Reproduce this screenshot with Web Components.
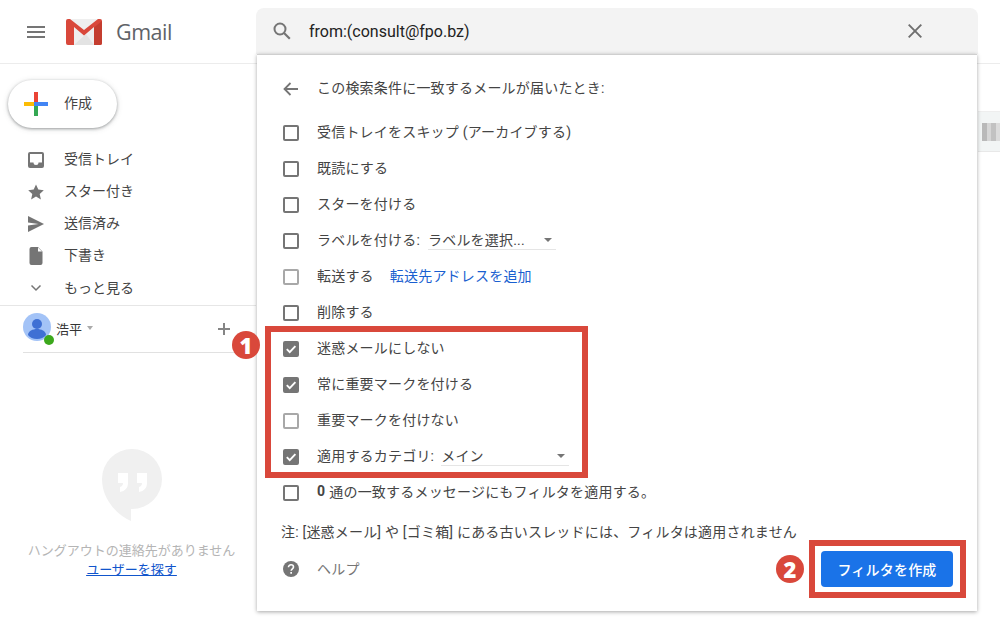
<!DOCTYPE html>
<html lang="ja">
<head>
<meta charset="utf-8">
<title>Gmail</title>
<style>
    html, body { margin: 0; height: 100%; background: #fff; overflow: hidden; }
    body { font: 14px Roboto, "Noto Sans CJK JP", sans-serif; color: #444; }
</style>
</head>
<body>
<gm-app>
    <gm-header slot="header"></gm-header>
    <gm-sidebar slot="side"></gm-sidebar>
    <gm-peek slot="peek"></gm-peek>
    <gm-callout slot="over" number="1" style="left:265px;top:326px;width:323px;height:152px" badge-x="-33" badge-y="5"></gm-callout>
    <gm-callout slot="over" number="2" style="left:809px;top:540px;width:157px;height:58px" badge-x="-33" badge-y="15"></gm-callout>
</gm-app>

<script>
const JP = `Roboto, "Noto Sans CJK JP", sans-serif`;

class GmElement extends HTMLElement {
    constructor(html) {
        super();
        const template = document.createElement("template");
        template.innerHTML = html;
        this.attachShadow({ mode: "open" }).appendChild(template.content.cloneNode(true));
    }
}

class GmApp extends GmElement {
    constructor() {
        super(`
            <style>
                :host { display: block; position: relative; width: 1000px; height: 633px; overflow: hidden; }
                .body { display: flex; }
                .side { width: 256px; flex: none; }
                .main { flex: 1; display: flex; flex-direction: column; align-items: flex-end; }
            </style>
            <slot name="header"></slot>
            <div class="body">
                <div class="side"><slot name="side"></slot></div>
                <div class="main"><slot name="peek"></slot></div>
            </div>
            <slot name="over"></slot>
        `);
    }
}

class GmHeader extends GmElement {
    constructor() {
        super(`
            <style>
                :host { display: flex; height: 63px; border-bottom: 1px solid #ececec; position: relative; z-index: 2; }
                .brand { width: 256px; flex: none; display: flex; align-items: center; }
                .menu { margin-left: 27px; width: 18px; height: 12px; margin-top: 1px; }
                .logo { margin-left: 21px; width: 36px; height: 26px; }
                .name { margin-left: 14px; font: 21.5px/26px "Open Sans", sans-serif; letter-spacing: -0.5px; color: #5f6368; }
            </style>
            <div class="brand">
                <svg class="menu" viewBox="0 0 18 12"><path d="M0 0h18v2H0zM0 5h18v2H0zM0 10h18v2H0z" fill="#757575"/></svg>
                <svg class="logo" viewBox="0 0 36 26">
                    <path d="M2 0h32a2 2 0 0 1 2 2v22a2 2 0 0 1-2 2H2a2 2 0 0 1-2-2V2a2 2 0 0 1 2-2z" fill="#efefef"/>
                    <path d="M8 26 20 15l8 11z" fill="#e3e3e3"/>
                    <path d="M0 2a2 2 0 0 1 2-2h2l14 11L32 0h2a2 2 0 0 1 2 2v22a2 2 0 0 1-2 2h-6V8l-10 8.500L8 8v18H2a2 2 0 0 1-2-2z" fill="#d9483b"/>
                    <path d="M28 8.500 36 2v22a2 2 0 0 1-2 2h-6z" fill="#c43d2f"/>
                </svg>
                <span class="name">Gmail</span>
            </div>
            <gm-search></gm-search>
        `);
    }
}

class GmSearch extends GmElement {
    constructor() {
        super(`
            <style>
                :host { display: block; position: relative; width: 722px; height: 46px; margin-top: 8px; background: #f3f3f3; border-radius: 8px 8px 0 0; }
                .bar { display: flex; align-items: center; height: 46px; }
                .icon { margin-left: 17px; width: 18px; height: 18px; }
                .query { margin-left: 18px; margin-top: 2px; flex: 1; font: 16px/24px Roboto, sans-serif; color: #222; }
                .clear { margin-right: 56px; width: 14px; height: 14px; }
            </style>
            <div class="bar">
                <svg class="icon" viewBox="0 0 18 18"><circle cx="7" cy="7" r="5.500" fill="none" stroke="#757575" stroke-width="2"/><path d="m11 11 5.800 5.800" stroke="#757575" stroke-width="2.200"/></svg>
                <span class="query">from:(consult@fpo.bz)</span>
                <svg class="clear" viewBox="0 0 14 14"><path d="m.7.7 12.600 12.600M13.300.7.7 13.300" stroke="#6f6f6f" stroke-width="1.900"/></svg>
            </div>
            <gm-filter-dialog></gm-filter-dialog>
        `);
    }
}

class GmSidebar extends GmElement {
    constructor() {
        super(`
            <style>
                :host { display: block; font-family: ${JP}; }
                .compose { display: flex; align-items: center; box-sizing: border-box; width: 109px; height: 48px; margin: 16px 0 0 8px; border-radius: 24px; background: #fff; box-shadow: 0 1px 3px rgba(60,64,67,.45), 0 1px 6px rgba(60,64,67,.15); font-size: 14px; color: #444; }
                .compose svg { margin-left: 16px; width: 24px; height: 24px; }
                .compose span { margin-left: 16px; margin-bottom: 4px; }
                nav { margin-top: 15px; display: flex; flex-direction: column; }
                .account { display: flex; align-items: center; height: 44px; padding-bottom: 2px; margin-top: 2px; border-top: 1px solid #e6e6e6; }
                .avatar { position: relative; margin-left: 23px; width: 28px; height: 28px; border-radius: 50%; background: #a3c3f7; margin-top: -2px; }
                .avatar svg { width: 28px; height: 28px; display: block; }
                .online { position: absolute; right: -3px; bottom: -4px; width: 10px; height: 10px; border-radius: 50%; background: #3ca81c; border: 0; }
                .who { margin-left: 5px; font-size: 13px; color: #333; }
                .caret { margin-left: 5px; width: 0; height: 0; border: 3.500px solid transparent; border-top: 4px solid #aaa; border-bottom: 0; }
                .add { margin-left: auto; margin-right: 26px; width: 12px; height: 12px; margin-top: 2px; }
                .rule { margin: 0 16px 0 23px; border-top: 1px solid #e1e1e1; }
                .hangouts { display: flex; flex-direction: column; align-items: center; margin: 96px 0 0 7px; color: #b5b5b5; font-size: 13px; line-height: 19px; white-space: nowrap; }
                .hangouts svg { width: 60px; height: 72px; margin-bottom: 20px; }
                a { color: #1155cc; text-decoration: underline; font-size: 13px; }
            </style>
            <div class="compose">
                <svg viewBox="0 0 24 24">
                    <path d="M10 0h4v10h-4z" fill="#ea4335"/><path d="M14 10h10v4H14z" fill="#4285f4"/>
                    <path d="M10 14h4v10h-4z" fill="#34a853"/><path d="M0 10h10v4H0z" fill="#fbbc05"/>
                    <path d="M10 10h4v4h-4z" fill="#4285f4"/>
                </svg>
                <span>作成</span>
            </div>
            <nav>
                <gm-nav-item label="受信トレイ"><svg viewBox="0 0 16 16"><path fill-rule="evenodd" d="M2 0h12a2 2 0 0 1 2 2v12a2 2 0 0 1-2 2H2a2 2 0 0 1-2-2V2a2 2 0 0 1 2-2zm0 2v8.500h3.500A2.500 2.500 0 0 0 8 13a2.500 2.500 0 0 0 2.500-2.500H14V2z" fill="#757575"/></svg></gm-nav-item>
                <gm-nav-item label="スター付き"><svg viewBox="0 0 16 16"><path d="m8 .5 2.300 5.100 5.500.6-4.100 3.700 1.200 5.500L8 12.600l-4.900 2.800 1.200-5.500L.2 6.200l5.500-.6z" fill="#757575"/></svg></gm-nav-item>
                <gm-nav-item label="送信済み"><svg viewBox="0 0 16 16"><path d="M0 0v6.500L10.500 8 0 9.500V16l16-8z" fill="#757575"/></svg></gm-nav-item>
                <gm-nav-item label="下書き"><svg viewBox="0 0 16 16"><path d="M3.500 -1H10l4.500 4.500V15a2 2 0 0 1-2 2h-9a2 2 0 0 1-2-2V1a2 2 0 0 1 2-2z" fill="#757575"/><path d="M10 -.5v4h4z" fill="#fff"/></svg></gm-nav-item>
                <gm-nav-item more label="もっと見る"><svg viewBox="0 0 16 16"><path d="m3.500 5.500 4.500 4.500 4.500-4.500" fill="none" stroke="#757575" stroke-width="1.500"/></svg></gm-nav-item>
            </nav>
            <div class="account">
                <div class="avatar">
                    <svg viewBox="0 0 28 28"><circle cx="14" cy="11" r="5" fill="#3f70d4"/><path d="M5 22c0-4 5-6 9-6s9 2 9 6c-2 2.500-5 4-9 4s-7-1.500-9-4z" fill="#3f70d4"/></svg>
                    <div class="online"></div>
                </div>
                <span class="who">浩平</span>
                <span class="caret"></span>
                <svg class="add" viewBox="0 0 12 12"><path d="M5 0h2v12H5zM0 5h12v2H0z" fill="#858585"/></svg>
            </div>
            <div class="rule"></div>
            <div class="hangouts">
                <svg viewBox="0 0 60 72">
                    <path d="M30 0a30 30 0 0 1 0 60h-1v12c-14-6-29-22-29-42A30 30 0 0 1 30 0z" fill="#f0f0f0"/>
                    <path d="M16 24h10v10c0 5-3 8-8 9v-5c2-.5 3-2 3-4h-5zM35 24h10v10c0 5-3 8-8 9v-5c2-.5 3-2 3-4h-5z" fill="#fff"/>
                </svg>
                <span>ハングアウトの連絡先がありません</span>
                <a>ユーザーを探す</a>
            </div>
        `);
    }
}

class GmNavItem extends GmElement {
    constructor() {
        super(`
            <style>
                :host { display: flex; align-items: center; height: 32px; font-family: ${JP}; font-size: 14px; color: #444; }
                .ico { margin-left: 28px; margin-top: 2px; width: 16px; height: 16px; }
                ::slotted(svg) { display: block; width: 16px; height: 16px; overflow: visible; }
                .text { margin-left: 20px; margin-bottom: 2px; }
                :host([more]) .text { margin-bottom: 0; }
            </style>
            <div class="ico"><slot></slot></div>
            <span class="text"></span>
        `);
    }
    connectedCallback() {
        this.shadowRoot.querySelector(".text").textContent = this.getAttribute("label");
    }
}

class GmCheck extends GmElement {
    constructor() {
        super(`
            <style>
                :host { display: block; box-sizing: border-box; width: 16px; height: 16px; margin-top: 2px; border: 2px solid #757575; border-radius: 2px; flex: none; }
                :host([muted]) { border-color: #a8a8a8; }
                :host([checked]) { background: #757575; }
                svg { display: none; width: 12px; height: 12px; }
                :host([checked]) svg { display: block; }
            </style>
            <svg viewBox="0 0 12 12"><path d="m1.800 6.200 2.900 2.900 5.700-6" fill="none" stroke="#fff" stroke-width="1.900"/></svg>
        `);
    }
}

class GmFilterRow extends GmElement {
    constructor() {
        super(`
            <style>
                :host { display: flex; align-items: center; height: 36px; padding-left: 26px; white-space: nowrap; color: #444; }
                .text { margin-left: 18px; margin-bottom: 2px; display: flex; align-items: center; }
            </style>
            <gm-check></gm-check>
            <div class="text"><slot></slot></div>
        `);
    }
    connectedCallback() {
        const box = this.shadowRoot.querySelector("gm-check");
        if (this.hasAttribute("checked")) box.setAttribute("checked", "");
        if (this.hasAttribute("muted")) box.setAttribute("muted", "");
    }
}

class GmSelect extends GmElement {
    constructor() {
        super(`
            <style>
                :host { display: flex; align-items: center; justify-content: space-between; box-sizing: border-box; height: 21px; margin-top: 1px; border-bottom: 1px solid #e5e5e5; padding-right: 4px; color: #444; }
                .caret { width: 0; height: 0; border: 4px solid transparent; border-top: 4px solid #757575; border-bottom: 0; margin-top: 2px; }
            </style>
            <span><slot></slot></span>
            <span class="caret"></span>
        `);
    }
}

class GmFilterDialog extends GmElement {
    constructor() {
        super(`
            <style>
                :host { display: block; position: absolute; left: 1px; top: 46px; box-sizing: border-box; width: 720px; height: 557px; padding-top: 16px; background: #fff; border-top: 1px solid #cfcfcf; box-shadow: 0 1px 4px rgba(0,0,0,.35); font-family: ${JP}; font-size: 14px; letter-spacing: .2px; color: #444; }
                .head { display: flex; align-items: center; height: 36px; padding-left: 26px; margin-bottom: 8px; margin-top: -1px; }
                .head svg { width: 16px; height: 14px; margin-top: 2px; }
                .head span { margin-left: 18px; margin-bottom: 2px; }
                a { color: #1a5fd0; margin-left: 16px; }
                b { font-weight: 700; margin-right: 4px; }
                .note { margin: 12px 0 0 24px; line-height: 20px; color: #444; }
                .foot { display: flex; align-items: center; margin-top: 9px; padding-left: 26px; height: 36px; }
                .foot svg { width: 16px; height: 16px; }
                .help { margin-left: 18px; margin-top: -2px; color: #757575; }
                button { margin-left: auto; margin-right: 24px; box-sizing: border-box; width: 132px; height: 36px; border: 0; border-radius: 4px; background: #1a73e8; color: #fff; font: 500 14px ${JP}; letter-spacing: .2px; padding-bottom: 2px; }
            </style>
            <div class="head">
                <svg viewBox="0 0 16 14"><path d="M15 7H2M7.500 1 1.500 7l6 6" fill="none" stroke="#757575" stroke-width="1.800"/></svg>
                <span>この検索条件に一致するメールが届いたとき:</span>
            </div>
            <gm-filter-row>受信トレイをスキップ (アーカイブする)</gm-filter-row>
            <gm-filter-row>既読にする</gm-filter-row>
            <gm-filter-row>スターを付ける</gm-filter-row>
            <gm-filter-row>ラベルを付ける: <gm-select style="width:128px;margin-left:8px">ラベルを選択...</gm-select></gm-filter-row>
            <gm-filter-row muted>転送する <a>転送先アドレスを追加</a></gm-filter-row>
            <gm-filter-row>削除する</gm-filter-row>
            <gm-filter-row checked>迷惑メールにしない</gm-filter-row>
            <gm-filter-row checked>常に重要マークを付ける</gm-filter-row>
            <gm-filter-row muted>重要マークを付けない</gm-filter-row>
            <gm-filter-row checked>適用するカテゴリ: <gm-select style="width:128px;margin-left:7px">メイン</gm-select></gm-filter-row>
            <gm-filter-row><b>0</b> 通の一致するメッセージにもフィルタを適用する。</gm-filter-row>
            <div class="note">注: [迷惑メール] や [ゴミ箱] にある古いスレッドには、フィルタは適用されません</div>
            <div class="foot">
                <svg viewBox="0 0 16 16"><circle cx="8" cy="8" r="8" fill="#757575"/><path d="M5.500 6.200C5.500 4.800 6.600 3.800 8 3.800s2.500 1 2.500 2.200c0 1.800-2.300 1.800-2.300 3.800" fill="none" stroke="#fff" stroke-width="1.600"/><path d="M7.300 11h1.700v1.700H7.300z" fill="#fff"/></svg>
                <span class="help">ヘルプ</span>
                <button>フィルタを作成</button>
            </div>
        `);
    }
}

class GmPeek extends GmElement {
    constructor() {
        super(`
            <style>
                :host { display: flex; align-items: center; box-sizing: border-box; width: 22px; height: 41px; margin-top: 47px; background: #f2f5f5; border-top: 1px solid #eee; border-bottom: 1px solid #e8e8e8; padding-left: 4px; }
                i { display: block; width: 6px; height: 18px; background: #dcdcdc; }
                i:nth-child(2) { background: #b9b9b9; }
                i:nth-child(3) { background: #d6d6d6; }
                i:nth-child(4) { background: #c2c2c2; }
            </style>
            <i></i><i></i><i></i><i></i>
        `);
    }
}

class GmCallout extends GmElement {
    constructor() {
        super(`
            <style>
                :host { display: block; position: absolute; box-sizing: border-box; border: 6px solid #d9483b; z-index: 5; }
                .badge { position: absolute; width: 28px; height: 28px; border-radius: 50%; background: #d9483b; color: #fff; font: 800 22px/28px "Open Sans", sans-serif; text-align: center; }
            </style>
            <div class="badge"></div>
        `);
    }
    connectedCallback() {
        const badge = this.shadowRoot.querySelector(".badge");
        badge.textContent = this.getAttribute("number");
        badge.style.left = (this.getAttribute("badge-x") - 6) + "px";
        badge.style.top = (this.getAttribute("badge-y") - 6) + "px";
    }
}

customElements.define("gm-app", GmApp);
customElements.define("gm-check", GmCheck);
customElements.define("gm-filter-row", GmFilterRow);
customElements.define("gm-select", GmSelect);
customElements.define("gm-filter-dialog", GmFilterDialog);
customElements.define("gm-search", GmSearch);
customElements.define("gm-header", GmHeader);
customElements.define("gm-nav-item", GmNavItem);
customElements.define("gm-sidebar", GmSidebar);
customElements.define("gm-peek", GmPeek);
customElements.define("gm-callout", GmCallout);
</script>
</body>
</html>
